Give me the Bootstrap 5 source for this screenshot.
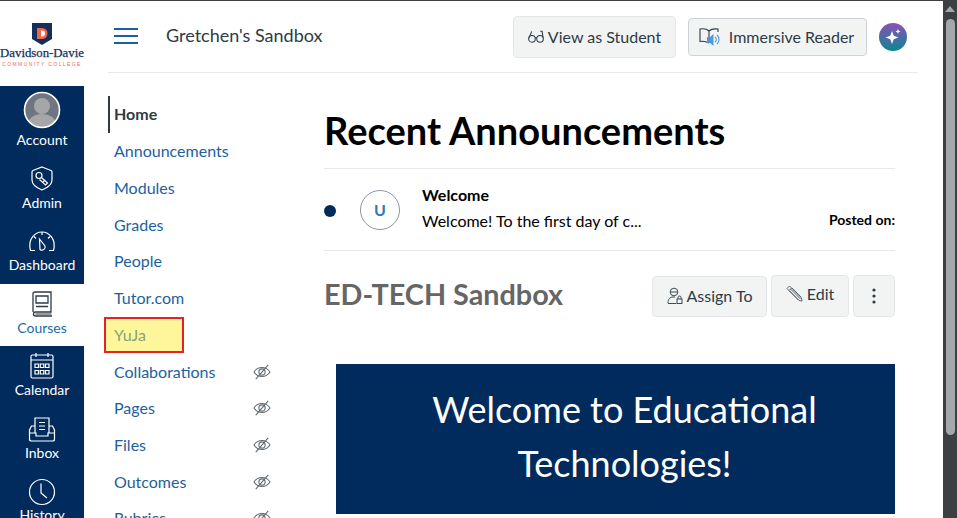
<!DOCTYPE html>
<html lang="en">
<head>
    <meta charset="UTF-8">
    <meta name="viewport" content="width=device-width, initial-scale=1.0">
    <title>Gretchen's Sandbox</title>
    <link href="https://cdn.jsdelivr.net/npm/bootstrap@5.3.0/dist/css/bootstrap.min.css" rel="stylesheet">
    <style>
        html, body { height: 100%; overflow: hidden; }
        body {
            font-family: Lato, "Liberation Sans", sans-serif;
            color: #2d3b45;
            border-top: 1px solid #3c4043;
        }
        .page-wrap { height: 517px; overflow: hidden; }

        /* left global nav */
        .global-nav { width: 84px; flex: 0 0 84px; height: 517px; overflow: hidden; }
        .logo-box { height: 85px; padding-top: 22px; text-align: center; white-space: nowrap; overflow: hidden; }
        .logo-name { font-family: "Liberation Serif", serif; font-size: 12.8px; font-weight: 400; line-height: 14px; color: #14305a; -webkit-text-stroke: 0.25px #14305a; }
        .logo-sub { font-family: "Liberation Sans", sans-serif; font-size: 5px; letter-spacing: 1.4px; line-height: 7px; color: #ee6a55; margin-top: 1px; }
        .nav-stack { background: #002b5c; padding-top: 10px; }
        .gnav-item { height: 62.5px; color: #fff; font-size: 14px; line-height: 16px; text-align: center; text-decoration: none; padding-top: 4px; }
        .gnav-item svg { display: block; margin: 0 auto; height: 32px; width: 32px; }
        .gnav-item svg.avatar-icon { height: 38px; width: 38px; margin-top: -9.5px; margin-bottom: 3.5px; }
        .gnav-item.is-active { background: #fff; color: #1d6aa5; }

        /* header */
        .course-head { height: 72px; margin-left: 24px; margin-right: 25px; border-bottom: 1px solid #e6e8ea; }
        .burger { width: 24px; margin-left: 6px; margin-right: 28px; margin-top: -1px; }
        .burger span { display: block; height: 2px; background: #1d5f9e; margin-bottom: 5px; }
        .course-title { font-size: 18px; margin-top: -2px; color: #2d3b45; }
        .tool-btn {
            background: #f2f4f4;
            border: 1px solid #e4e7e9;
            border-radius: 4px;
            color: #2d3b45;
            font-size: 16px;
            padding: 0;
            display: flex;
            align-items: center;
            justify-content: center;
        }
        .btn-student { width: 163px; height: 42px; margin-right: 12px; }
        .btn-reader { width: 179px; height: 38px; border-color: #cdd2d6; margin-top: 1px; margin-right: 12px; padding-right: 2px; padding-bottom: 1px; }
        .ai-dot { width: 28px; height: 28px; border-radius: 50%; background: linear-gradient(#8d4fb5, #0b8793); margin-right: 11px; margin-top: 1px; }

        /* course nav */
        .course-nav { width: 216px; flex: 0 0 216px; margin-left: 24px; padding-top: 23.4px; }
        .cnav-item { height: 36.7px; flex: 0 0 36.7px; font-size: 16px; color: #1d5f9e; padding-left: 6px; padding-right: 53px; text-decoration: none; }
        .cnav-home { font-weight: 700; color: #2d3b45; border-left: 2px solid #2d3b45; padding-left: 4px; padding-bottom: 1px; }
        .cnav-hl { margin-left: -4px; margin-right: 140px; padding-left: 8px; padding-right: 0; height: 36px; flex-basis: 36px; background: #fff59b; border: 2px solid #e8202a; color: #87a46f; margin-bottom: 0.7px; }
        .cnav-item svg { width: 18px; height: 16px; }

        /* content */
        .course-body { width: 571px; padding-top: 34px; }
        .heading-big { font-size: 38px; font-weight: 700; color: #000; line-height: 46px; margin: 0 0 15.400px; }
        .ann-row { height: 83px; border-top: 1px solid #e6e8ea; border-bottom: 1px solid #e6e8ea; color: #000; }
        .ann-dot { width: 12px; height: 12px; border-radius: 50%; background: #002b5c; margin-right: 24px; margin-top: 2px; }
        .ann-avatar { width: 40px; height: 40px; border-radius: 50%; border: 1px solid #8d959f; color: #2a7abf; font-weight: 700; font-size: 16px; margin-right: 22px; }
        .ann-title { font-size: 16px; font-weight: 700; line-height: 20px; margin-top: -3px; }
        .ann-text { font-size: 16px; line-height: 20px; margin-top: 6px; }
        .ann-posted { font-size: 14px; font-weight: 700; margin-top: 19px; }
        .title-row { height: 113px; padding-top: 24px; }
        .heading-page { font-size: 28.8px; font-weight: 700; color: #666; line-height: 40px; margin: -1px 0 0; }
        .page-btn { background: #f2f4f4; border: 1px solid #e4e7e9; border-radius: 4px; color: #2d3b45; font-size: 16px; padding: 0; display: flex; align-items: center; justify-content: center; }
        .btn-assign { width: 115px; height: 41px; margin-right: 4px; margin-top: 1px; padding-bottom: 2px; }
        .btn-edit { width: 78px; height: 42px; margin-right: 4px; padding-bottom: 5px; }
        .btn-more { width: 42px; height: 42px; }
        .welcome-banner { margin-left: 12px; height: 150px; background: #002b5c; color: #fff; font-size: 36px; line-height: 54px; text-align: center; padding: 18px 0 0 18px; }

        /* fake window scrollbar */
        .win-scroll { width: 14px; flex: 0 0 14px; height: 517px; background: #3c4043; position: relative; }
        .scroll-up { width: 0; height: 0; border-left: 5px solid transparent; border-right: 5px solid transparent; border-bottom: 6px solid #a5a7a9; margin: 5px auto 0; }
        .scroll-thumb { background: #a5a7a9; width: 9px; height: 416px; margin: 7px auto 0; border-radius: 5px; }
    </style>
</head>
<body>
<div class="page-wrap d-flex">

    <!-- global nav -->
    <div class="global-nav">
        <div class="logo-box">
            <svg width="20" height="23" viewBox="0 0 20 23" class="d-block mx-auto">
                <path d="M0 0h20v16l-10 6-10-6z" fill="#14305a"/>
                <path d="M5 5h5a5.500 5.500 0 0 1 0 11H5z" fill="#f0644a"/>
                <path d="M9 7.500h1a3 3 0 0 1 0 6H9z" fill="#fff"/>
            </svg>
            <div class="logo-name">Davidson-Davie</div>
            <div class="logo-sub">COMMUNITY COLLEGE</div>
        </div>
        <div class="nav-stack">
            <a class="gnav-item d-block" href="#">
                <svg class="avatar-icon" viewBox="0 0 38 38" fill="none">
                    <defs><clipPath id="ac"><circle cx="19" cy="19" r="17.500"/></clipPath></defs>
                    <circle cx="19" cy="19" r="17.500" fill="#6f7680"/>
                    <g clip-path="url(#ac)" fill="#a4a6a8">
                        <circle cx="19" cy="15" r="8"/>
                        <ellipse cx="19" cy="33" rx="14" ry="10"/>
                    </g>
                    <circle cx="19" cy="19" r="17.500" stroke="#fff" stroke-width="1.600"/>
                </svg>
                Account
            </a>
            <a class="gnav-item d-block" href="#">
                <svg viewBox="0 0 32 32" fill="none" stroke="#fff" stroke-width="1.200">
                    <path d="M16 4l9 3.500c.7.300 1 .7 1 1.500v8c0 5-5 8-10 10-5-2-10-5-10-10V9c0-.8.3-1.200 1-1.500z"/>
                    <circle cx="13" cy="12.500" r="3"/>
                    <path d="M15.500 14.500l6 5.500-2 2-6-5.500"/>
                    <path d="M17 19l1.500-1.500"/>
                </svg>
                Admin
            </a>
            <a class="gnav-item d-block" href="#">
                <svg viewBox="0 0 32 32" fill="none" stroke="#fff" stroke-width="1.200">
                    <path d="M9 25.500H4.500C1.500 14 9 7 16 7s14.500 7 11.500 18.500H23"/>
                    <path d="M13.500 14l5.500 7a3.200 3.200 0 0 1-5 3.500z"/>
                    <path d="M16 7v3M8 11.500l2 2M24 11.500l-2 2"/>
                </svg>
                Dashboard
            </a>
            <a class="gnav-item is-active d-block" href="#">
                <svg viewBox="0 0 32 32" fill="none" stroke="#2d3b45" stroke-width="1.300">
                    <path d="M7 24V6a2 2 0 0 1 2-2h16v20H9.500a2 2 0 0 0 0 4H26"/>
                    <path d="M10 8h12v7H10zM10 18.500h12"/>
                    <path d="M9.500 26h16" stroke-width="1"/>
                </svg>
                Courses
            </a>
            <a class="gnav-item d-block" href="#">
                <svg viewBox="0 0 32 32" fill="none" stroke="#fff" stroke-width="1.200">
                    <rect x="5" y="5" width="22" height="23" rx="1.500"/>
                    <path d="M5 10h22M10 3v4M22 3v4"/>
                    <path d="M9 14h3.500v3.500H9zM14.300 14h3.500v3.500h-3.500zM19.500 14H23v3.500h-3.500zM9 20.500h3.500V24H9zM14.300 20.500h3.500V24h-3.500zM19.500 20.500H23V24h-3.500z"/>
                </svg>
                Calendar
            </a>
            <a class="gnav-item d-block" href="#">
                <svg viewBox="0 0 32 32" fill="none" stroke="#fff" stroke-width="1.200">
                    <path d="M9 20V5h14v15"/>
                    <path d="M13 9.500h6M13 13h6M13 16.500h6"/>
                    <path d="M9 13H5.500L3.500 17v9a2 2 0 0 0 2 2h21a2 2 0 0 0 2-2v-9l-2-4H23"/>
                    <path d="M3.500 20H10v3h12v-3h6.500"/>
                </svg>
                Inbox
            </a>
            <a class="gnav-item d-block" href="#">
                <svg viewBox="0 0 32 32" fill="none" stroke="#fff" stroke-width="1.200">
                    <circle cx="16" cy="17" r="12.500"/>
                    <path d="M15 8.500V18l6 5"/>
                </svg>
                History
            </a>
        </div>
    </div>

    <!-- main column -->
    <div class="flex-grow-1">
        <div class="course-head d-flex align-items-center">
            <div class="burger"><span></span><span></span><span class="mb-0"></span></div>
            <div class="course-title flex-grow-1">Gretchen's Sandbox</div>
            <button class="tool-btn btn-student gap-1">
                <svg width="16" height="14" viewBox="0 0 17 14" fill="none" stroke="#2d3b45" stroke-width="1.100">
                    <circle cx="4.200" cy="9" r="3.500"/><circle cx="12.800" cy="9" r="3.500"/>
                    <path d="M7.500 8c.6-.5 1.400-.5 2 0M1 8l3-7M16 8l-1-7h-2"/>
                </svg>
                View as Student
            </button>
            <button class="tool-btn btn-reader gap-2">
                <svg width="22" height="20" viewBox="0 0 22 20" fill="none">
                    <path d="M10 4C8 2 4 1.500 1 2v12.500c3-.5 6 0 9 1.500M10 4c2-2 5-2.500 9-2v3M10 4v6" stroke="#2d3b45" stroke-width="1.100"/>
                    <path d="M8 10h3l3.500-3v12L11 16H8z" fill="#4a9bdc"/>
                    <path d="M16 10a3 3 0 0 1 0 5M18 8a6 6 0 0 1 0 9" stroke="#4a9bdc" stroke-width="1.100"/>
                </svg>
                Immersive Reader
            </button>
            <div class="ai-dot d-flex align-items-center justify-content-center">
                <svg width="20" height="20" viewBox="0 0 20 20" fill="#fff">
                    <path d="M9 4l1.700 4.800L15.500 10.500l-4.800 1.700L9 17l-1.700-4.800L2.500 10.500l4.800-1.700z"/>
                    <path d="M15 2l.7 1.800 1.800.7-1.800.7L15 7l-.7-1.800-1.800-.7 1.800-.7z"/>
                </svg>
            </div>
        </div>

        <div class="d-flex">
            <div class="course-nav d-flex flex-column">
                <a class="cnav-item cnav-home d-flex align-items-center" href="#">Home</a>
                <a class="cnav-item d-flex align-items-center" href="#">Announcements</a>
                <a class="cnav-item d-flex align-items-center" href="#">Modules</a>
                <a class="cnav-item d-flex align-items-center" href="#">Grades</a>
                <a class="cnav-item d-flex align-items-center" href="#">People</a>
                <a class="cnav-item d-flex align-items-center" href="#">Tutor.com</a>
                <a class="cnav-item cnav-hl d-flex align-items-center" href="#">YuJa</a>
                <a class="cnav-item d-flex align-items-center justify-content-between" href="#">Collaborations <svg viewBox="0 0 20 18"><use href="#eye-off"/></svg></a>
                <a class="cnav-item d-flex align-items-center justify-content-between" href="#">Pages <svg viewBox="0 0 20 18"><use href="#eye-off"/></svg></a>
                <a class="cnav-item d-flex align-items-center justify-content-between" href="#">Files <svg viewBox="0 0 20 18"><use href="#eye-off"/></svg></a>
                <a class="cnav-item d-flex align-items-center justify-content-between" href="#">Outcomes <svg viewBox="0 0 20 18"><use href="#eye-off"/></svg></a>
                <a class="cnav-item d-flex align-items-center justify-content-between" href="#">Rubrics <svg viewBox="0 0 20 18"><use href="#eye-off"/></svg></a>
            </div>

            <div class="course-body">
                <h1 class="heading-big">Recent Announcements</h1>
                <div class="ann-row d-flex align-items-center">
                    <div class="ann-dot"></div>
                    <div class="ann-avatar d-flex align-items-center justify-content-center">U</div>
                    <div class="flex-grow-1">
                        <div class="ann-title">Welcome</div>
                        <div class="ann-text">Welcome! To the first day of c...</div>
                    </div>
                    <div class="ann-posted">Posted on:</div>
                </div>
                <div class="title-row d-flex">
                    <h2 class="heading-page flex-grow-1">ED-TECH Sandbox</h2>
                    <button class="page-btn btn-assign gap-1">
                        <svg width="16" height="18" viewBox="0 0 16 18" fill="none" stroke="#3d4a54" stroke-width="1">
                            <circle cx="7" cy="5" r="3.800"/>
                            <path d="M3.500 5h7M1 16c0-4 2-6 5-6h2"/>
                            <path d="M1 16.500h8"/>
                            <rect x="10" y="12" width="5" height="4.500"/>
                            <path d="M11 12v-1.500a1.500 1.500 0 0 1 3 0V12"/>
                        </svg>
                        Assign To
                    </button>
                    <button class="page-btn btn-edit gap-1">
                        <svg width="17" height="17" viewBox="0 0 17 17" fill="none" stroke="#4c5860" stroke-width="0.900">
                            <path d="M1 3.500L3.500 1l12 12 .5 3-3-.5zM3 5.500L5.500 3M4.500 4l10 10M3.500 6l9 9M6 3l9 9"/>
                        </svg>
                        Edit
                    </button>
                    <button class="page-btn btn-more">
                        <svg width="4" height="16" viewBox="0 0 4 16" fill="#2d3b45"><circle cx="2" cy="2" r="1.600"/><circle cx="2" cy="8" r="1.600"/><circle cx="2" cy="14" r="1.600"/></svg>
                    </button>
                </div>
                <div class="welcome-banner">Welcome to Educational<br>Technologies!</div>
            </div>
        </div>
    </div>

    <div class="win-scroll">
        <div class="scroll-up"></div>
        <div class="scroll-thumb"></div>
    </div>
</div>

<svg width="0" height="0" class="d-block">
    <symbol id="eye-off" viewBox="0 0 20 18">
        <g fill="none" stroke="#5f6a72" stroke-width="1.200">
            <path d="M1 9c2-3 5.500-5 9-5s7 2 9 5c-2 3-5.500 5-9 5s-7-2-9-5z"/>
            <circle cx="10" cy="9" r="3.500"/>
            <path d="M3 17L17 1"/>
        </g>
    </symbol>
</svg>
</body>
</html>
